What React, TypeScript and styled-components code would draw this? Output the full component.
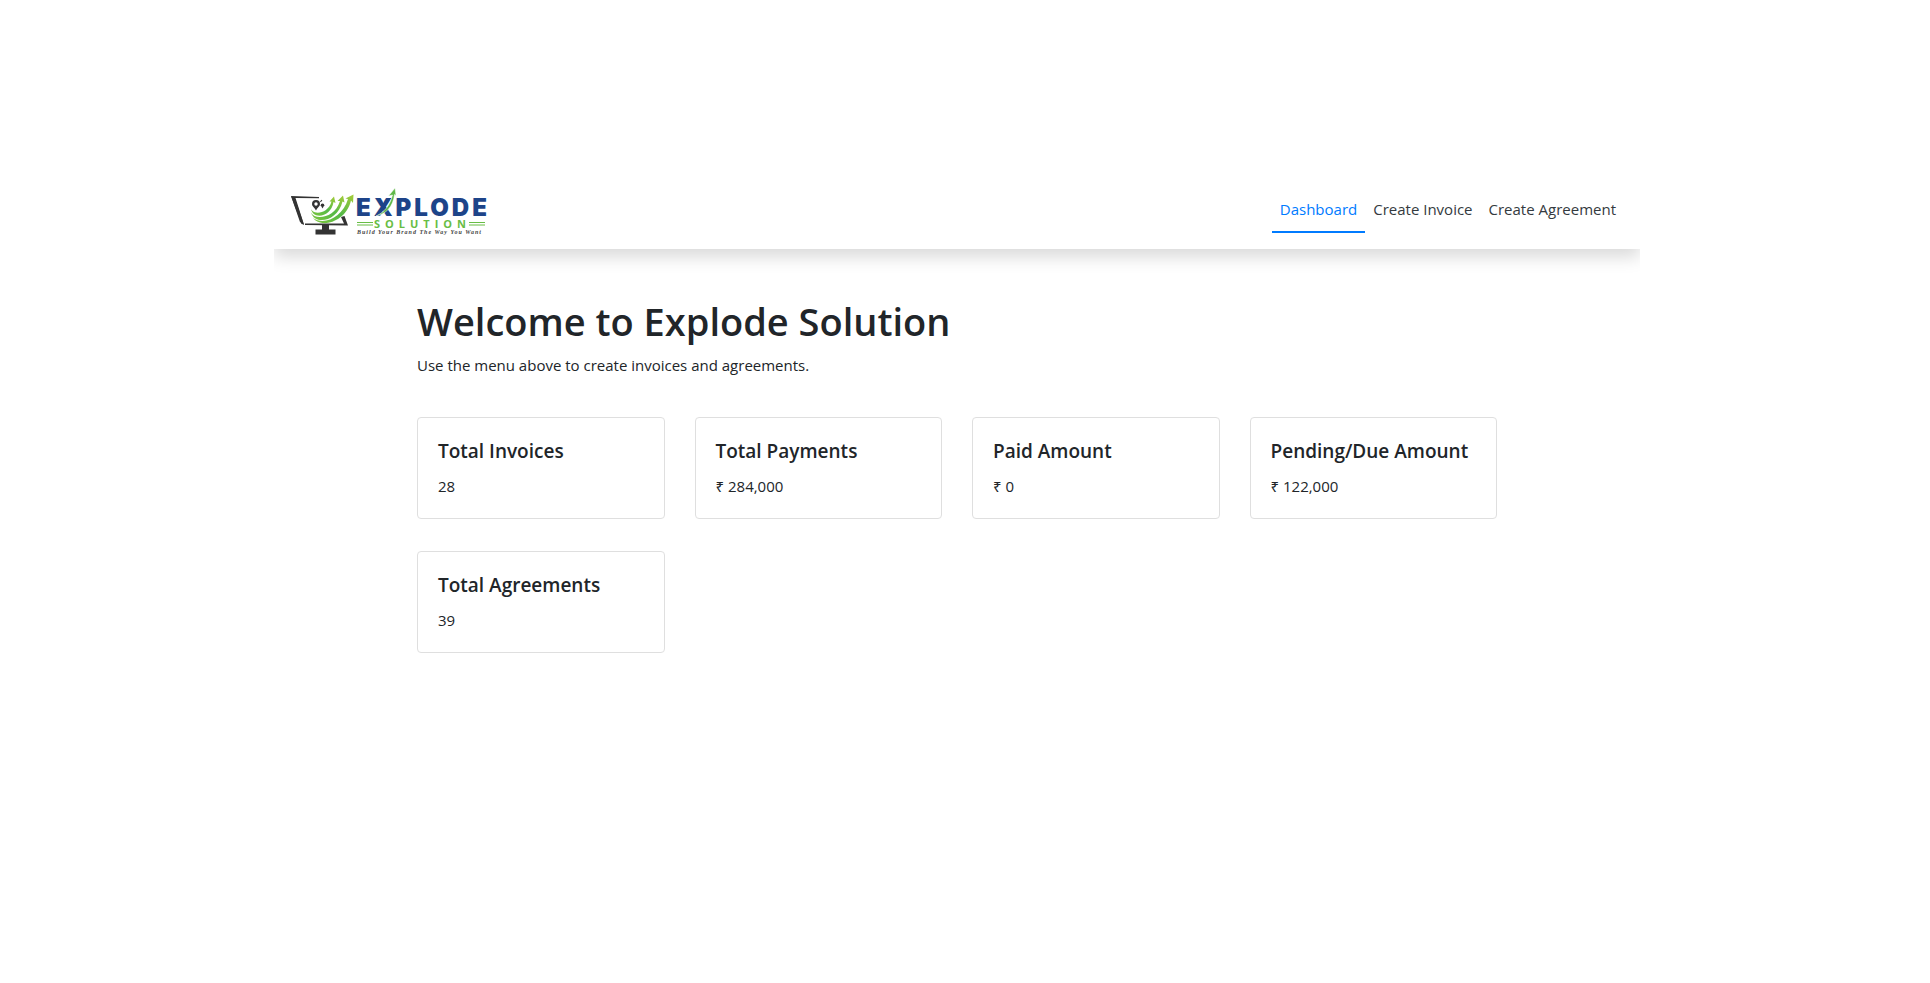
import React from "react";
import styled, { createGlobalStyle } from "styled-components";

const GlobalStyle = createGlobalStyle`
  *, *::before, *::after { box-sizing: border-box; }
  body {
    margin: 0;
    padding-right: 16px;
    background: #fff;
    color: #212529;
    font-family: "Open Sans", "Noto Sans", sans-serif;
    font-size: 15px;
    line-height: 24px;
  }
`;

const Page = styled.div`
  max-width: 1366px;
  margin: 169px auto 0;
  overflow: hidden;
`;

const Header = styled.header`
  display: flex;
  align-items: flex-end;
  justify-content: space-between;
  flex-wrap: wrap;
  padding: 12px 16px;
  background: #fff;
  box-shadow: 0 8px 16px rgba(0, 0, 0, 0.15);
`;

const Brand = styled.a`
  display: flex;
  text-decoration: none;
`;

const Nav = styled.nav`
  display: flex;
  padding-bottom: 4px;
`;

const NavLink = styled.a<{ $active?: boolean }>`
  padding: 8px 8px 10px;
  border-bottom: 2px solid ${(p) => (p.$active ? "#007bff" : "transparent")};
  color: ${(p) => (p.$active ? "#007bff" : "#343a40")};
  text-decoration: none;
`;

const Main = styled.main`
  max-width: 1110px;
  margin: 0 auto;
  padding: 48px 15px;
`;

const Title = styled.h1`
  margin: 0 0 8px;
  font-size: 38px;
  font-weight: 600;
  line-height: 48px;
`;

const Lead = styled.p`
  margin: 0 0 40px;
`;

const Cards = styled.section`
  display: grid;
  grid-template-columns: repeat(auto-fill, minmax(240px, 1fr));
  gap: 32px 30px;
`;

const Card = styled.article`
  padding: 21px 20px 20px;
  border: 1px solid #dfdfdf;
  border-radius: 4px;
  background: #fff;
`;

const CardTitle = styled.h2`
  margin: 0 0 11px;
  font-size: 19px;
  font-weight: 600;
  line-height: 24px;
`;

const CardValue = styled.p`
  margin: 0;
`;

function Logo() {
  return (
    <svg width="200" height="56" viewBox="0 -2 200 56" role="img" aria-label="Explode Solution">
      <defs>
        <linearGradient id="swoosh" x1="0" y1="1" x2="1" y2="0">
          <stop offset="0" stopColor="#7cc63c" />
          <stop offset="0.5" stopColor="#55b947" />
          <stop offset="1" stopColor="#a5cc38" />
        </linearGradient>
      </defs>
      <g fill="#333">
        <path d="M1 13 L29 14 L29 15.300 L5.500 15 L14 41.500 L11.500 41 Z" />
        <path d="M1 13 L5 15.500 L14 42 L10 39 Z" />
        <path d="M15 40.500 L54 40.500 L51 34 L54.500 33 L58 42.500 L15 42 Z" />
        <path d="M32 42 h7 v4.500 h6.500 v5 h-20 v-5 h6.500 Z" />
        <path d="M26 17 a4 4 0 0 1 4 4 c0 2.500 -2.500 3.500 -4 6.500 c-1.500 -3 -4 -4 -4 -6.500 a4 4 0 0 1 4 -4 Z" />
        <path d="M32.500 20.500 a1.800 1.800 0 0 1 1.800 1.800 l-1.800 3.200 l-1.800 -3.200 a1.800 1.800 0 0 1 1.800 -1.800 Z" />
        <path d="M30 18.500 l1.500 -1.800 l0.800 0.600 l-1.500 1.900 Z" />
      </g>
      <circle cx="26" cy="21" r="1.700" fill="#fff" />
      <g fill="url(#swoosh)">
        <path d="M20.500 23 C20 33 38 32 41.500 18.500 L39.500 18.500 L44 13.500 L45.500 20 L43.500 19 C41 35 21 38 20.500 23 Z" />
        <path d="M21 29.500 C25 38 45 35 50 18 L47.500 18 L53 12.500 L54.500 19.500 L52.500 18.500 C48 38 25 43 21 29.500 Z" />
        <path d="M23 35 C34 43 53 34 58 16 L55.500 15.500 L63.500 11.500 L63 20 L61 17.500 C56 39 31 46 23 35 Z" />
      </g>
      <text x="66" y="33" fill="#1d4489" fontFamily="Inter, sans-serif" fontWeight="900" fontSize="24" letterSpacing="3">
        EXPLODE
      </text>
      <path d="M86 33 C95 29 100 22 102.500 12 L98.500 13 L105 5 L106 12.500 L104.500 11.500 C103 24 96 31 86 33 Z" fill="#60b848" stroke="#fff" strokeWidth="0.500" />
      <path d="M67 39.500 H83 M67 42 H83 M179 39.500 H195 M179 42 H195" stroke="#68bd45" strokeWidth="1" />
      <text x="84" y="45" fill="#68bd45" fontFamily="'Open Sans', sans-serif" fontWeight="700" fontSize="11" letterSpacing="5">
        SOLUTION
      </text>
      <text x="67" y="51" fill="#444" fontFamily="'Liberation Serif', serif" fontStyle="italic" fontWeight="700" fontSize="6" letterSpacing="1">
        Build Your Brand The Way You Want
      </text>
    </svg>
  );
}

const links = ["Dashboard", "Create Invoice", "Create Agreement"];

const stats = [
  { title: "Total Invoices", value: "28" },
  { title: "Total Payments", value: "₹ 284,000" },
  { title: "Paid Amount", value: "₹ 0" },
  { title: "Pending/Due Amount", value: "₹ 122,000" },
  { title: "Total Agreements", value: "39" },
];

export default function App() {
  return (
    <>
      <GlobalStyle />
      <Page>
        <Header>
          <Brand href="#">
            <Logo />
          </Brand>
          <Nav aria-label="Main">
            {links.map((label, i) => (
              <NavLink key={label} href="#" $active={i === 0} aria-current={i === 0 ? "page" : undefined}>
                {label}
              </NavLink>
            ))}
          </Nav>
        </Header>
        <Main>
          <Title>Welcome to Explode Solution</Title>
          <Lead>Use the menu above to create invoices and agreements.</Lead>
          <Cards>
            {stats.map((s) => (
              <Card key={s.title}>
                <CardTitle>{s.title}</CardTitle>
                <CardValue>{s.value}</CardValue>
              </Card>
            ))}
          </Cards>
        </Main>
      </Page>
    </>
  );
}
